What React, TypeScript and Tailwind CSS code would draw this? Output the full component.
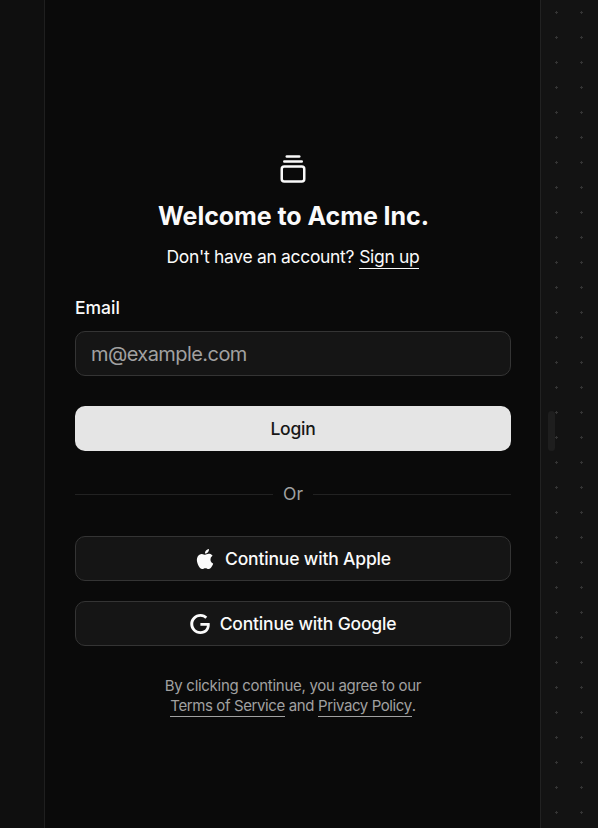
import type { ReactNode } from "react";
import { GalleryVerticalEnd } from "lucide-react";

function SocialButton({ icon, children }: { icon: ReactNode; children: ReactNode }) {
  return (
    <button className="flex h-[45px] w-full items-center justify-center gap-2.5 rounded-[10px] border border-[#343434] bg-[#151515] text-[17.5px] leading-[25px] font-medium tracking-[-0.17px] text-[#fafafa]">
      {icon}
      {children}
    </button>
  );
}

const AppleIcon = (
  <svg viewBox="0 0 24 24" className="size-5 shrink-0" fill="currentColor">
    <path d="M12.152 6.896c-.948 0-2.415-1.078-3.96-1.04-2.04.027-3.91 1.183-4.961 3.014-2.117 3.675-.546 9.103 1.519 12.09 1.013 1.454 2.208 3.09 3.792 3.039 1.52-.065 2.09-.987 3.935-.987 1.831 0 2.35.987 3.96.948 1.637-.026 2.676-1.48 3.676-2.948 1.156-1.688 1.636-3.325 1.662-3.415-.039-.013-3.182-1.221-3.22-4.857-.026-3.04 2.48-4.494 2.597-4.559-1.429-2.09-3.623-2.324-4.39-2.376-2-.156-3.675 1.09-4.61 1.09zM15.53 3.83c.843-1.012 1.4-2.427 1.245-3.83-1.207.052-2.662.805-3.532 1.818-.78.896-1.454 2.338-1.273 3.714 1.338.104 2.715-.688 3.559-1.701" />
  </svg>
);

const GoogleIcon = (
  <svg viewBox="0 0 24 24" className="size-5 shrink-0" fill="currentColor">
    <path d="M12.48 10.92v3.28h7.84c-.24 1.84-.853 3.187-1.787 4.133-1.147 1.147-2.933 2.4-6.053 2.4-4.827 0-8.6-3.893-8.6-8.72s3.773-8.72 8.6-8.72c2.6 0 4.507 1.027 5.907 2.347l2.307-2.307C18.747 1.44 16.133 0 12.48 0 5.867 0 .307 5.387.307 12s5.56 12 12.173 12c3.573 0 6.267-1.173 8.373-3.36 2.16-2.16 2.84-5.213 2.84-7.667 0-.76-.053-1.467-.173-2.053H12.48z" />
  </svg>
);

export default function App() {
  return (
    <div className="flex h-[828px] w-[598px] overflow-hidden bg-[#0a0a0a] font-['Inter','Liberation_Sans',sans-serif] text-[#fafafa]">
      <div className="w-[45px] shrink-0 border-r border-[#1f1f1f] bg-[#0f0f0f]" />
      <main className="flex w-[495px] shrink-0 flex-col pt-[154px] pr-[29px] pl-[30px]">
        <header className="flex flex-col items-center">
          <GalleryVerticalEnd size={30} />
          <h1 className="mt-[15px] pl-px text-[25px] leading-[35px] font-bold tracking-[-0.06px] whitespace-nowrap">Welcome to Acme Inc.</h1>
          <p className="mt-2.5 flex gap-[5px] text-[17.5px] leading-[26px] tracking-[-0.32px] whitespace-nowrap">
            <span>Don't have an account?</span>
            <a className="h-[25px] border-b border-[#fafafa]">Sign up</a>
          </p>
        </header>
        <form className="mt-[29px] flex flex-col">
          <label className="text-[17.5px] leading-[18px] font-medium">
            <span>Email</span>
          </label>
          <input
            placeholder="m@example.com"
            className="mt-[14px] h-[45px] rounded-[10px] border border-[#343434] bg-[#151515] px-[15px] text-[20px] tracking-[-0.57px] placeholder:text-[#a1a1a1]"
          />
          <button type="button" className="mt-[30px] h-[45px] rounded-[10px] bg-[#e5e5e5] pt-0.5 text-[17.5px] font-[450] tracking-[-0.2px] text-[#171717]">
            Login
          </button>
        </form>
        <div className="mt-[31px] flex h-[25px] items-center text-[17.5px] leading-[25px] text-[#a1a1a1]">
          <span className="h-px flex-1 bg-[#222222]" />
          <span className="w-10 pb-[3px] text-center">Or</span>
          <span className="h-px flex-1 bg-[#222222]" />
        </div>
        <div className="mt-[29px] flex flex-col gap-5">
          <SocialButton icon={AppleIcon}><span>Continue with Apple</span></SocialButton>
          <SocialButton icon={GoogleIcon}><span>Continue with Google</span></SocialButton>
        </div>
        <footer className="mt-[30px] flex flex-col items-center text-[15px] leading-5 tracking-[-0.29px] whitespace-nowrap text-[#a1a1a1]">
          <span>By clicking continue, you agree to our</span>
          <p className="flex tracking-[-0.4px]">
            <a className="h-[21px] border-b border-[#a1a1a1]">Terms of Service</a>
            <span className="mx-1">and</span>
            <a className="h-[21px] border-b border-[#a1a1a1]">Privacy Policy</a>
            <span>.</span>
          </p>
        </footer>
      </main>
      <aside className="relative flex-1 border-l border-[#222222] bg-[#131313]">
        <svg className="block size-full">
          <defs>
            <pattern id="crosses" x="14" y="11" width="25" height="25" patternUnits="userSpaceOnUse">
              <path d="M1 0h1v3h-1zM0 1h3v1h-3z" fill="#343434" shapeRendering="crispEdges" />
            </pattern>
          </defs>
          <rect width="100%" height="100%" fill="url(#crosses)" />
        </svg>
        <div className="absolute top-[411px] left-[7px] h-10 w-[7px] rounded-full bg-[#1e1e1e]" />
      </aside>
    </div>
  );
}
